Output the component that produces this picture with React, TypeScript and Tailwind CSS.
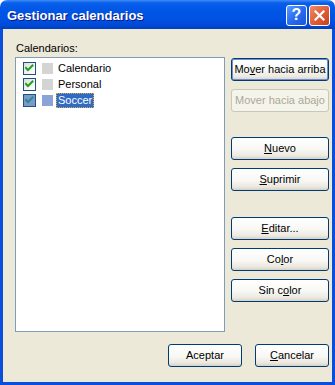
const rows = [
  { name: "Calendario", swatch: "bg-[#d4d4d4]", selected: false },
  { name: "Personal", swatch: "bg-[#d4d4d4]", selected: false },
  { name: "Soccer", swatch: "bg-[#8ba3d6]", selected: true },
];

function Check({ selected }: { selected: boolean }) {
  return (
    <div
      className={`mt-[1px] w-[13px] h-[13px] border border-[#1c5180] flex items-center justify-center ${
        selected
          ? "bg-[#7d99cc]"
          : "bg-[linear-gradient(135deg,#dcdcd7_0%,#f4f4f2_60%,#ffffff_100%)]"
      }`}
    >
      <svg width="9" height="9" viewBox="0 0 9 9">
        <path
          d="M1 4 L3 6 L7.5 1.5"
          fill="none"
          stroke={selected ? "#2b8a8c" : "#21a121"}
          strokeWidth="2"
          strokeLinecap="square"
        />
      </svg>
    </div>
  );
}

function Btn({
  children,
  className = "",
  disabled = false,
  isDefault = false,
}: {
  children: React.ReactNode;
  className?: string;
  disabled?: boolean;
  isDefault?: boolean;
}) {
  return (
    <div
      className={`h-[23px] rounded-[3px] border flex items-center justify-center text-[11px] leading-[13px] ${
        disabled
          ? "border-[#c9c7ba] bg-[#f5f4ea] text-[#aca899]"
          : "border-[#003c74] text-black bg-[linear-gradient(180deg,#ffffff_0%,#f7f7f4_55%,#ebe8df_85%,#d6d0c5_100%)]"
      } ${isDefault ? "shadow-[inset_0_0_0_1px_#6f8fd0]" : ""} ${className}`}
    >
      {children}
    </div>
  );
}

const U = ({ children }: { children: React.ReactNode }) => (
  <span className="underline underline-offset-[1px]">{children}</span>
);

export default function App() {
  return (
    <div className="w-[335px] h-[385px] bg-white font-['Liberation_Sans',Arial,sans-serif]">
      <div className="w-[335px] h-[385px] flex flex-col">
        {/* Title bar */}
        <div className="h-[29px] shrink-0 rounded-t-[7px] bg-[linear-gradient(180deg,#3d8ff8_0%,#0a5fea_10%,#0056e6_35%,#0052e2_65%,#0049d6_88%,#003fbf_100%)] flex items-center pl-[7px] pr-[5px] pt-[3px]">
          <span className="flex-1 text-white font-bold text-[13px] leading-[16px] [text-shadow:1px_1px_0_#0a1883]">
            Gestionar calendarios
          </span>
          <div className="w-[21px] h-[21px] -mt-[2px] rounded-[3px] border border-white bg-[linear-gradient(135deg,#5c9cff_0%,#2a6cf0_50%,#1a55d8_100%)] flex items-center justify-center text-white font-bold text-[16px] leading-none">
            ?
          </div>
          <div className="w-[21px] h-[21px] -mt-[2px] ml-[2px] rounded-[3px] border border-white bg-[linear-gradient(135deg,#f08a64_0%,#e0603a_50%,#c63f1c_100%)] flex items-center justify-center">
            <svg width="11" height="11" viewBox="0 0 11 11">
              <path d="M1.5 1.5 L9.5 9.5 M9.5 1.5 L1.5 9.5" stroke="white" strokeWidth="2.2" strokeLinecap="square" />
            </svg>
          </div>
        </div>

        {/* Client area */}
        <div className="flex-1 border-x-[3px] border-b-[3px] border-[#0a4fdc] bg-[#ece9d8] flex flex-col pt-[13px] pl-[12px] text-[11px] text-black">
          <div className="flex">
            <div className="w-[210px] flex flex-col">
              <div className="h-[15px] leading-[13px] pl-[1px]">Calendarios:</div>
              <div className="h-[275px] border border-[#7f9db9] bg-white pt-[3px] pl-[7px]">
                {rows.map((r) => (
                  <div key={r.name} className="flex items-start h-[16px]">
                    <Check selected={r.selected} />
                    <div className={`mt-[2px] ml-[6px] w-[11px] h-[11px] ${r.swatch}`} />
                    <div
                      className={`ml-[3px] h-[15px] leading-[13px] px-[1px] border ${
                        r.selected
                          ? "bg-[#316ac5] text-white border-dotted border-[#d8b040]"
                          : "border-transparent"
                      }`}
                    >
                      {r.name}
                    </div>
                  </div>
                ))}
              </div>
            </div>

            <div className="ml-[6px] mt-[16px] w-[98px] flex flex-col">
              <Btn isDefault>
                Mo<U>v</U>er hacia arriba
              </Btn>
              <Btn disabled className="mt-[8px]">
                Mover hacia abajo
              </Btn>
              <Btn className="mt-[25px]">
                <U>N</U>uevo
              </Btn>
              <Btn className="mt-[8px]">
                <U>S</U>uprimir
              </Btn>
              <Btn className="mt-[26px]">
                <U>E</U>ditar...
              </Btn>
              <Btn className="mt-[8px]">
                Co<U>l</U>or
              </Btn>
              <Btn className="mt-[8px]">
                Sin c<U>o</U>lor
              </Btn>
            </div>
          </div>

          <div className="flex mt-[12px] pl-[153px]">
            <Btn className="w-[74px]">Aceptar</Btn>
            <Btn className="w-[74px] ml-[13px]">
              <U>C</U>ancelar
            </Btn>
          </div>
        </div>
      </div>
    </div>
  );
}
